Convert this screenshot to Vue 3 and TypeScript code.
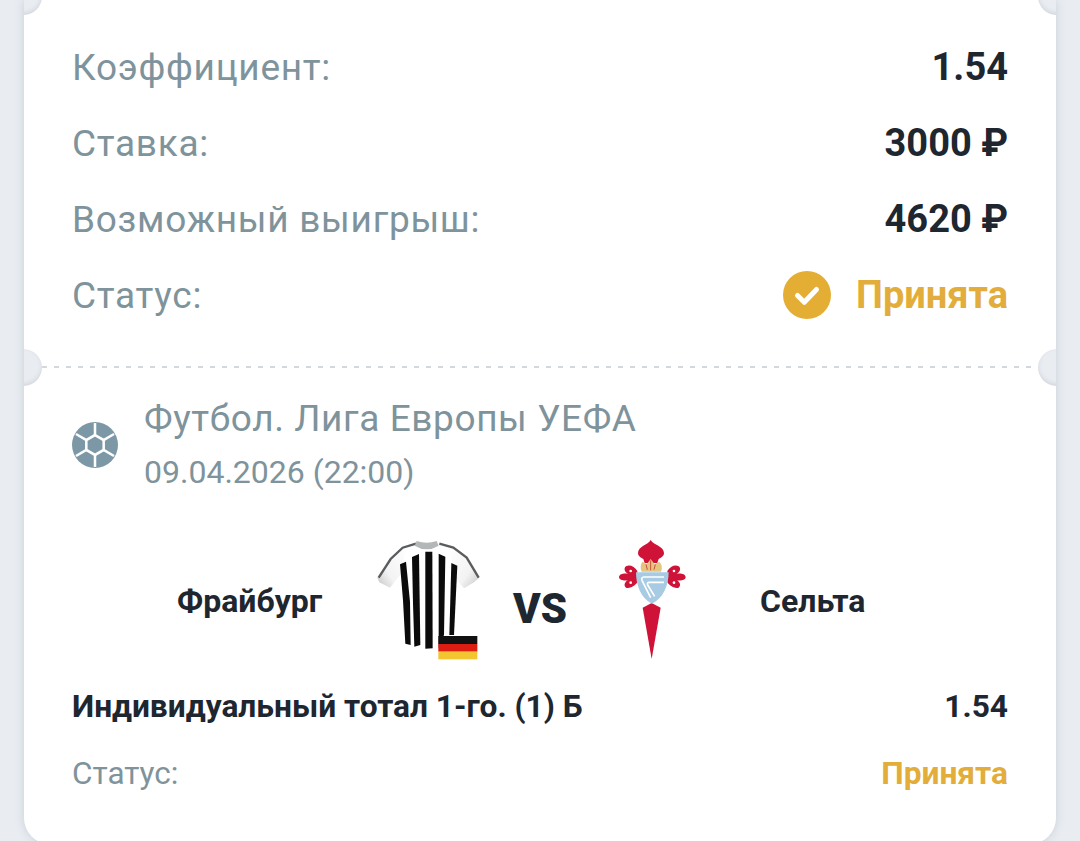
<script setup lang="ts">
const rows: { label: string; value: string }[] = [
  { label: 'Коэффициент:', value: '1.54' },
  { label: 'Ставка:', value: '3000 ₽' },
  { label: 'Возможный выигрыш:', value: '4620 ₽' },
]
const spokes: number[][] = [
  [22, 1, 22, 13], [40.2, 11.5, 29.8, 17.5], [40.2, 32.5, 29.8, 26.5],
  [22, 43, 22, 31], [3.8, 32.5, 14.2, 26.5], [3.8, 11.5, 14.2, 17.5],
]
</script>

<template>
  <div class="page">
    <div class="ticket">
      <span class="notch top-left"></span>
      <span class="notch top-right"></span>
      <span class="notch mid-left"></span>
      <span class="notch mid-right"></span>

      <section class="summary">
        <div v-for="r in rows" :key="r.label" class="row">
          <span class="label">{{ r.label }}</span>
          <span class="value">{{ r.value }}</span>
        </div>
        <div class="row">
          <span class="label">Статус:</span>
          <span class="status">
            <svg class="check" viewBox="0 0 48 48" width="48" height="48">
              <circle cx="24" cy="24" r="24" fill="#e4ad33" />
              <path d="M14.5 24.5l6.8 6.8L33.5 18.5" fill="none" stroke="#fff" stroke-width="5" stroke-linecap="round" stroke-linejoin="round" />
            </svg>
            <span class="status-text">Принята</span>
          </span>
        </div>
      </section>

      <div class="divider"></div>

      <section class="event">
        <div class="league">
          <svg class="ball" viewBox="0 0 44 44" width="46" height="46">
            <circle cx="22" cy="22" r="22" fill="#7c98a6" />
            <g stroke="#fff" stroke-width="2.4">
              <line v-for="(s, i) in spokes" :key="i" :x1="s[0]" :y1="s[1]" :x2="s[2]" :y2="s[3]" />
              <path d="M22 12.5l8.3 4.8v9.4L22 31.5l-8.3-4.8v-9.4z" fill="#7c98a6" />
            </g>
          </svg>
          <div class="league-text">
            <div class="league-name">Футбол. Лига Европы УЕФА</div>
            <div class="league-date">09.04.2026 (22:00)</div>
          </div>
        </div>

        <div class="match">
          <div class="team home">Фрайбург</div>
          <svg class="shirt" viewBox="0 0 345 390" width="115" height="130">
            <defs>
              <linearGradient id="sleeveL" x1="0" y1="1" x2="1" y2="0">
                <stop offset="0" stop-color="#c4c4c4" />
                <stop offset="0.35" stop-color="#f3f3f3" />
                <stop offset="1" stop-color="#fff" />
              </linearGradient>
              <linearGradient id="sleeveR" x1="1" y1="1" x2="0" y2="0">
                <stop offset="0" stop-color="#c4c4c4" />
                <stop offset="0.35" stop-color="#f3f3f3" />
                <stop offset="1" stop-color="#fff" />
              </linearGradient>
            </defs>
            <path d="M22 128L58 70 95 36 112 32 100 80 92 118 60 158 28 142z" fill="url(#sleeveL)" />
            <path d="M328 128L292 66 250 34 234 30 246 80 246 118 282 160 312 142z" fill="url(#sleeveR)" />
            <path d="M26 128L62 72 98 38 138 26" fill="none" stroke="#5a5d5f" stroke-width="7" />
            <path d="M326 128L290 68 250 38 208 26" fill="none" stroke="#5a5d5f" stroke-width="7" />
            <path d="M140 18q30 10 60 0l6 14q-36 22-72 0z" fill="#b4b7b8" />
            <g fill="#0b0b0b">
              <path d="M90 88l18-8 12 120 2 130-16-4-7-130z" />
              <path d="M126 66l21-9 4 273-18 5-4-130z" />
              <path d="M166 50h21l1 290-22 1z" />
              <path d="M206 56l20 9-4 235-6 12-10 28z" />
              <path d="M244 84l18 8-10 208h-14z" />
            </g>
            <rect x="205" y="303" width="117" height="24" fill="#111" />
            <rect x="205" y="327" width="117" height="23" fill="#dd1c12" />
            <rect x="205" y="350" width="117" height="23" fill="#f3c531" />
          </svg>
          <div class="vs">VS</div>
          <svg class="crest" viewBox="0 0 255 390" width="85" height="130">
            <g fill="#cf1237">
              <path d="M122 15C130 30 162 34 162 54 162 64 152 68 146 72L142 84H104L100 72C94 68 84 64 84 54 84 34 114 30 122 15z" />
              <path d="M82 108C74 94 58 88 48 94 40 100 44 112 54 116 42 114 28 116 27 126 28 136 42 138 54 136 44 140 40 152 48 158 58 162 74 154 82 142z" />
              <path d="M172 108C180 94 196 88 206 94 214 100 210 112 200 116 212 114 226 116 227 126 226 136 212 138 200 136 210 140 214 152 206 158 196 162 180 154 172 142z" />
              <path d="M125 204L152 218 125 372 98 218z" />
            </g>
            <g fill="#fff">
              <circle cx="62" cy="108" r="4" />
              <circle cx="62" cy="143" r="4" />
              <circle cx="192" cy="108" r="4" />
              <circle cx="192" cy="143" r="4" />
            </g>
            <path d="M95 110C90 96 92 86 98 80L110 88 122 72 134 88 148 80C156 88 158 98 153 110z" fill="#e4c680" />
            <path d="M108 88l4 16M122 76v30M136 88l-4 16" stroke="#c8503f" stroke-width="3" fill="none" />
            <path d="M78 112H176C176 150 160 190 126 206 92 190 78 150 78 112z" fill="#a8cbe4" />
            <path d="M162 126H102C95 126 94 131 96 136L122 188M162 142H118C112 142 111 146 113 150L134 184" fill="none" stroke="#fff" stroke-width="5" />
          </svg>
          <div class="team away">Сельта</div>
        </div>

        <div class="bet-row">
          <span class="bet-name">Индивидуальный тотал 1-го. (1) Б</span>
          <span class="bet-odds">1.54</span>
        </div>
        <div class="bet-status">
          <span class="small-label">Статус:</span>
          <span class="small-status">Принята</span>
        </div>
      </section>
    </div>
  </div>
</template>

<style>
html, body { margin: 0; background: #e9edf2; }
</style>

<style scoped>
.page {
  width: 1080px;
  height: 841px;
  overflow: hidden;
  box-sizing: border-box;
  padding: 0 24px;
  background: #e9edf2;
  font-family: Roboto, "Liberation Sans", sans-serif;
}
.ticket {
  position: relative;
  width: 1032px;
  height: 844px;
  overflow: hidden;
  background: #fff;
  border-radius: 0 0 26px 26px;
  box-shadow: 0 0 10px rgba(120, 130, 145, 0.28);
}
.notch {
  position: absolute;
  width: 37px;
  height: 37px;
  border-radius: 50%;
  background: #e9edf2;
  box-shadow: inset 0 -2px 4px rgba(120, 130, 145, 0.2);
}
.top-left { left: -19px; top: -22px; }
.top-right { right: -19px; top: -22px; }
.mid-left { left: -19px; top: 349px; }
.mid-right { right: -19px; top: 349px; }
.summary {
  height: 366px;
  box-sizing: border-box;
  padding: 29px 48px 0;
}
.row {
  height: 76px;
  display: flex;
  align-items: center;
  justify-content: space-between;
}
.label {
  font-size: 37px;
  letter-spacing: 0.72px;
  color: #7e939b;
}
.value {
  font-size: 38px;
  font-weight: 700;
  color: #1e2630;
}
.status { display: flex; align-items: center; gap: 25px; }
.status-text { font-size: 38px; font-weight: 700; color: #e2ad3a; }
.divider {
  height: 2px;
  margin: 0 18px;
  background: repeating-linear-gradient(90deg, #d3d8dc 0 5px, transparent 5px 12px);
}
.event { padding: 0 48px; }
.league {
  height: 128px;
  padding: 27px 0 3px;
  display: flex;
  align-items: center;
  gap: 26px;
}
.ball { margin-top: -28px; flex: none; }
.league-name {
  font-size: 37px;
  line-height: 40px;
  letter-spacing: 0.6px;
  color: #7e939b;
  margin-top: -28px;
}
.league-date {
  font-size: 32px;
  line-height: 40px;
  color: #7e939b;
  margin-top: 13px;
}
.match {
  height: 142px;
  display: flex;
  align-items: center;
  margin: 0 -48px;
  padding-top: 8px;
  box-sizing: border-box;
}
.team { font-size: 32px; font-weight: 700; color: #1e2630; }
.home { width: 193px; margin-left: 153px; flex: none; }
.shirt { flex: none; margin-top: -3px; }
.vs {
  width: 125px;
  flex: none;
  box-sizing: border-box;
  padding-right: 15px;
  text-align: center;
  font-size: 42px;
  font-weight: 900;
  color: #1e2630;
  margin-top: 14px;
}
.crest { flex: none; margin-top: -3px; }
.away { margin-left: 65px; }
.bet-row {
  height: 40px;
  margin-top: 18px;
  display: flex;
  align-items: center;
  justify-content: space-between;
  font-size: 31.7px;
  font-weight: 700;
  color: #1e2630;
}
.bet-status {
  height: 40px;
  margin-top: 27px;
  display: flex;
  align-items: center;
  justify-content: space-between;
}
.small-label { font-size: 31.5px; color: #7e939b; }
.small-status { font-size: 31.7px; font-weight: 700; color: #e2ad3a; }
</style>
